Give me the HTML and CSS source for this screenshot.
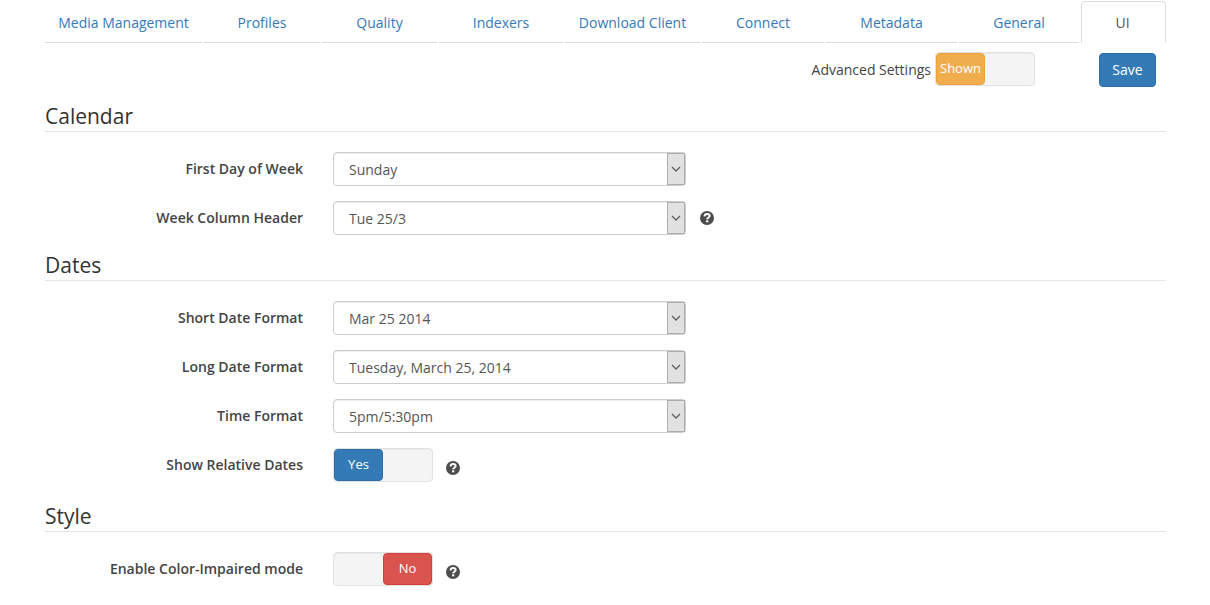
FILE: index.html
```html
<!DOCTYPE html>
<html lang="en">
<head>
<meta charset="utf-8">
<title>Settings - UI</title>
<link rel="stylesheet" href="styles.css">
</head>
<body>
<svg class="symbols" aria-hidden="true">
  <symbol id="chevron" viewBox="0 0 10 6"><path d="M1 1l4 4 4-4" fill="none" stroke="#606060" stroke-width="1.3"/></symbol>
  <symbol id="help" viewBox="0 0 14 14">
    <circle cx="7" cy="7" r="7" fill="#4d4d4d"/>
    <path d="M4.5 5.3C4.7 3.8 5.7 3.1 7.1 3.1c1.5 0 2.5.8 2.5 2 0 1.7-2.4 1.6-2.4 3.2" fill="none" stroke="#fff" stroke-width="2"/>
    <path d="M6.1 9.3h2.2v2H6.1z" fill="#fff"/>
  </symbol>
</svg>
<div class="page">
  <nav class="tabs">
    <a class="tab" href="#media">Media Management</a>
    <a class="tab" href="#profiles">Profiles</a>
    <a class="tab" href="#quality">Quality</a>
    <a class="tab" href="#indexers">Indexers</a>
    <a class="tab" href="#download">Download Client</a>
    <a class="tab" href="#connect">Connect</a>
    <a class="tab" href="#metadata">Metadata</a>
    <a class="tab" href="#general">General</a>
    <a class="tab active" href="#ui" aria-current="page">UI</a>
  </nav>

  <form class="settings">
    <div class="toolbar">
      <label for="advanced">Advanced Settings</label>
      <span class="toggle warning"><input type="checkbox" id="advanced" checked><span class="slider">Shown</span></span>
      <button class="save" type="button">Save</button>
    </div>

    <section>
      <h2 class="legend">Calendar</h2>
      <div class="row">
        <label class="name" for="first-day">First Day of Week</label>
        <div class="select"><select id="first-day"><option>Sunday</option><option>Monday</option></select><span class="arrow"><svg><use href="#chevron"/></svg></span></div>
      </div>
      <div class="row">
        <label class="name" for="week-header">Week Column Header</label>
        <div class="select"><select id="week-header"><option>Tue 25/3</option></select><span class="arrow"><svg><use href="#chevron"/></svg></span></div>
        <svg class="help" role="img" aria-label="Help"><use href="#help"/></svg>
      </div>
    </section>

    <section>
      <h2 class="legend">Dates</h2>
      <div class="row">
        <label class="name" for="short-date">Short Date Format</label>
        <div class="select"><select id="short-date"><option>Mar 25 2014</option></select><span class="arrow"><svg><use href="#chevron"/></svg></span></div>
      </div>
      <div class="row">
        <label class="name" for="long-date">Long Date Format</label>
        <div class="select"><select id="long-date"><option>Tuesday, March 25, 2014</option></select><span class="arrow"><svg><use href="#chevron"/></svg></span></div>
      </div>
      <div class="row">
        <label class="name" for="time">Time Format</label>
        <div class="select"><select id="time"><option>5pm/5:30pm</option></select><span class="arrow"><svg><use href="#chevron"/></svg></span></div>
      </div>
      <div class="row toggle-row">
        <label class="name" for="relative">Show Relative Dates</label>
        <div class="toggle-group">
          <span class="toggle primary"><input type="checkbox" id="relative" checked><span class="slider">Yes</span></span>
          <svg class="help" role="img" aria-label="Help"><use href="#help"/></svg>
        </div>
      </div>
    </section>

    <section>
      <h2 class="legend">Style</h2>
      <div class="row toggle-row">
        <label class="name" for="impaired">Enable Color-Impaired mode</label>
        <div class="toggle-group">
          <span class="toggle danger"><input type="checkbox" id="impaired"><span class="slider">No</span></span>
          <svg class="help" role="img" aria-label="Help"><use href="#help"/></svg>
        </div>
      </div>
    </section>
  </form>
</div>
</body>
</html>
```
FILE: styles.css
```css
* {
  box-sizing: border-box;
}

body {
  margin: 0;
  background: #fff;
  color: #444;
  font: 14px/20px "Open Sans", "Noto Sans", sans-serif;
}

.symbols {
  display: none;
}

.page {
  padding: 1px 44px 0 45px;
}

.tabs {
  display: grid;
  grid-template-columns: 159fr 118fr 117fr 126fr 137fr 124fr 133fr 122fr 85fr;
}

.tab {
  margin-right: 2px;
  padding: 12px 0 9px;
  border-bottom: 1px solid #ddd;
  color: #337ab7;
  text-align: center;
  text-decoration: none;
}

.tab.active {
  margin-right: 0;
  padding-top: 11px;
  padding-right: 2px;
  border: 1px solid #ddd;
  border-bottom-color: transparent;
  border-radius: 4px 4px 0 0;
  color: #555;
}

.toolbar {
  display: flex;
  justify-content: flex-end;
  align-items: center;
  padding: 9px 10px 13px 0;
}

.toolbar .toggle {
  margin: 0 0 2px 4px;
}

.save {
  width: 57px;
  height: 34px;
  margin-left: 64px;
  padding: 0;
  border: 1px solid #2e6da4;
  border-radius: 4px;
  background: #337ab7;
  color: #fff;
  font: inherit;
}

.legend {
  margin: 0 0 20px;
  border-bottom: 1px solid #e5e5e5;
  color: #333;
  font-size: 21px;
  font-weight: 400;
  line-height: 30px;
}

.row {
  display: grid;
  grid-template-columns: 258fr 353fr 465fr;
  margin-bottom: 15px;
}

.name {
  padding: 7px 30px 7px 0;
  font-weight: 600;
  text-align: right;
}

.row {
  grid-template-columns: 288fr 353fr 480fr;
}

.toggle-row {
  min-height: 38px;
}

.select {
  position: relative;
  height: 34px;
}

.select select {
  width: 100%;
  height: 34px;
  padding: 1px 30px 0 15px;
  border: 1px solid #ccc;
  border-radius: 4px;
  background: #fff;
  box-shadow: inset 0 1px 1px rgba(0, 0, 0, 0.075);
  color: #555;
  font: inherit;
  appearance: none;
}

.arrow {
  position: absolute;
  top: 1px;
  right: 1px;
  bottom: 1px;
  display: grid;
  place-items: center;
  width: 18px;
  border: 1px solid #adadad;
  background: #e1e1e1;
  pointer-events: none;
}

.arrow svg {
  width: 10px;
  height: 6px;
}

.help {
  width: 14px;
  height: 14px;
  margin-left: 14px;
  align-self: center;
}

.toggle-group {
  display: flex;
  align-items: flex-start;
}

.toggle-group .help {
  align-self: flex-start;
  margin: 13px 0 0 13px;
}

.toggle {
  position: relative;
  display: flex;
  width: 100px;
  height: 34px;
  border: 1px solid #e2e2e2;
  border-radius: 4px;
  background: #f4f4f4;
  box-shadow: inset 0 1px 1px rgba(0, 0, 0, 0.05);
}

.toggle input {
  position: absolute;
  inset: 0;
  width: 100%;
  height: 100%;
  margin: 0;
  opacity: 0;
}

.slider {
  width: 49px;
  height: 32px;
  border: 1px solid;
  border-radius: 4px;
  color: #fff;
  font-size: 13px;
  line-height: 28px;
  text-align: center;
  pointer-events: none;
}

.warning .slider {
  border-color: #eea236;
  background: #f0ad4e;
}

.primary .slider {
  border-color: #2e6da4;
  background: #337ab7;
}

.danger .slider {
  margin-left: auto;
  border-color: #d43f3a;
  background: #d9534f;
}
```
